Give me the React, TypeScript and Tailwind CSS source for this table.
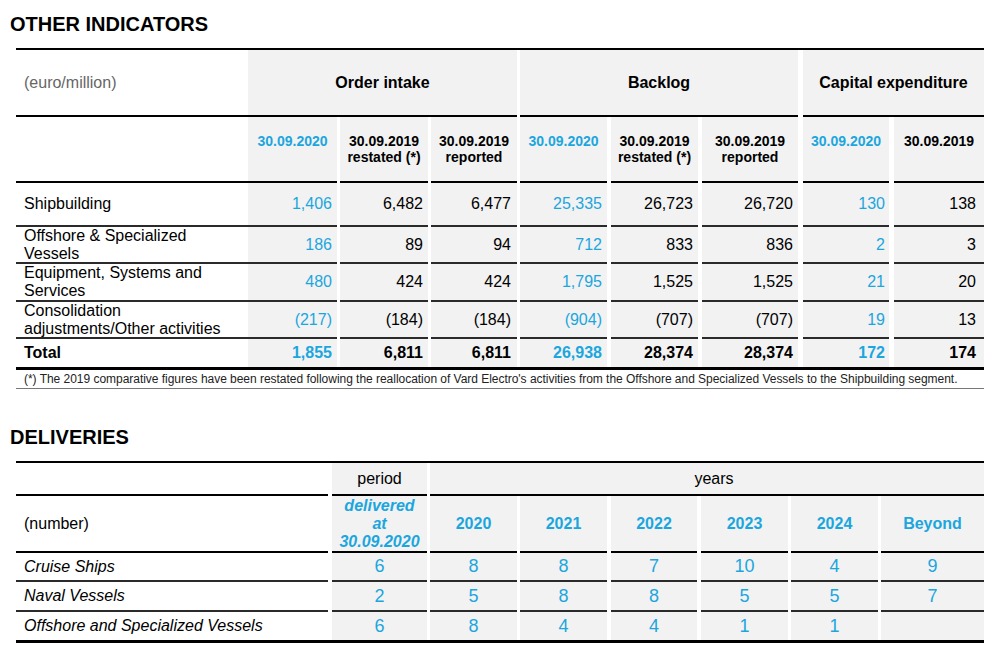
import React from 'react';

type Col = { box: string; pad: string; blue?: boolean };

// Other indicators: column boxes (gap + width) and right padding
const cols: Col[] = [
  { box: 'w-[89px]', pad: 'pr-[5px]', blue: true },
  { box: 'ml-[3px] w-[88px]', pad: 'pr-[5px]' },
  { box: 'ml-[3px] w-[86px]', pad: 'pr-[6px]' },
  { box: 'ml-[3px] w-[87px]', pad: 'pr-[5px]', blue: true },
  { box: 'ml-[4px] w-[87px]', pad: 'pr-[5px]' },
  { box: 'ml-[4px] w-[96px]', pad: 'pr-[5px]' },
  { box: 'ml-[5px] w-[86px]', pad: 'pr-[4px]', blue: true },
  { box: 'ml-[5px] w-[90px]', pad: 'pr-[8px]' },
];

const subHeads = [
  ['30.09.2020'],
  ['30.09.2019', 'restated (*)'],
  ['30.09.2019', 'reported'],
  ['30.09.2020'],
  ['30.09.2019', 'restated (*)'],
  ['30.09.2019', 'reported'],
  ['30.09.2020'],
  ['30.09.2019'],
];

const rows = [
  { label: ['Shipbuilding'], h: 'h-[44px]', values: ['1,406', '6,482', '6,477', '25,335', '26,723', '26,720', '130', '138'] },
  { label: ['Offshore & Specialized', 'Vessels'], h: 'h-[37px]', values: ['186', '89', '94', '712', '833', '836', '2', '3'] },
  { label: ['Equipment, Systems and', 'Services'], h: 'h-[38px]', values: ['480', '424', '424', '1,795', '1,525', '1,525', '21', '20'] },
  { label: ['Consolidation', 'adjustments/Other activities'], h: 'h-[37px]', values: ['(217)', '(184)', '(184)', '(904)', '(707)', '(707)', '19', '13'] },
];

const total = ['1,855', '6,811', '6,811', '26,938', '28,374', '28,374', '172', '174'];

// Deliveries columns
const dCols = [
  { box: 'ml-[4px] w-[95px]' },
  { box: 'ml-[3px] w-[87px]' },
  { box: 'ml-[3px] w-[87px]' },
  { box: 'ml-[4px] w-[86px]' },
  { box: 'ml-[4px] w-[87px]' },
  { box: 'ml-[3px] w-[87px]' },
  { box: 'ml-[3px] w-[103px]' },
];

const years = ['2020', '2021', '2022', '2023', '2024', 'Beyond'];

const deliveries = [
  { label: 'Cruise Ships', h: 'h-[29px]', values: ['6', '8', '8', '7', '10', '4', '9'] },
  { label: 'Naval Vessels', h: 'h-[30px]', values: ['2', '5', '8', '8', '5', '5', '7'] },
  { label: 'Offshore and Specialized Vessels', h: 'h-[28px]', values: ['6', '8', '4', '4', '1', '1', ''] },
];

const BLUE = 'text-[#1ca6de]';

export default function App() {
  return (
    <div className="w-[1000px] h-[660px] bg-white pl-[10px] pt-[12px] text-black font-['Liberation_Sans',Arial,sans-serif]">
      <h1 className="text-[20px] leading-[24px] font-bold">OTHER INDICATORS</h1>

      {/* Other indicators table */}
      <div className="ml-[6px] mt-[12px] w-[968px] border-t-2 border-black">
        {/* group headers */}
        <div className="flex h-[67px]">
          <div className="w-[232px] flex items-center pl-[8px] border-b-2 border-black text-[16px] text-[#666]">
            (euro/million)
          </div>
          <div className="w-[269px] flex items-center justify-center bg-[#f2f2f2] border-b-2 border-black text-[16px] font-bold">
            Order intake
          </div>
          <div className="ml-[3px] w-[278px] flex items-center justify-center bg-[#f2f2f2] border-b-2 border-black text-[16px] font-bold">
            Backlog
          </div>
          <div className="ml-[5px] w-[181px] flex items-center justify-center bg-[#f2f2f2] border-b-2 border-black text-[16px] font-bold">
            Capital expenditure
          </div>
        </div>

        {/* date headers */}
        <div className="flex h-[66px]">
          <div className="w-[232px] border-b-2 border-black" />
          {cols.map((c, i) => (
            <div
              key={i}
              className={`${c.box} ${c.blue ? BLUE : ''} bg-[#f2f2f2] border-b-2 border-black pt-[16px] text-center text-[14px] leading-[16px] font-bold`}
            >
              {subHeads[i].map((t) => (
                <div key={t}>{t}</div>
              ))}
            </div>
          ))}
        </div>

        {/* data rows */}
        {rows.map((r) => (
          <div key={r.label[0]} className={`flex ${r.h}`}>
            <div className="w-[232px] flex flex-col justify-center pl-[8px] border-b-2 border-[#2a2a2a] text-[16px] leading-[18px]">
              {r.label.map((l) => (
                <div key={l}>{l}</div>
              ))}
            </div>
            {cols.map((c, i) => (
              <div
                key={i}
                className={`${c.box} ${c.pad} ${c.blue ? BLUE : ''} bg-[#f2f2f2] border-b-2 border-[#2a2a2a] flex items-center justify-end text-[16px]`}
              >
                {r.values[i]}
              </div>
            ))}
          </div>
        ))}

        {/* total */}
        <div className="flex h-[31px] border-b-[3px] border-black font-bold">
          <div className="w-[232px] flex items-center pl-[8px] text-[16px]">Total</div>
          {cols.map((c, i) => (
            <div
              key={i}
              className={`${c.box} ${c.pad} ${c.blue ? BLUE : ''} bg-[#f2f2f2] flex items-center justify-end text-[16px]`}
            >
              {total[i]}
            </div>
          ))}
        </div>

        <div className="h-[19px] flex items-center pl-[8px] border-b border-[#777] text-[12px] tracking-[-0.03px] text-[#222] whitespace-nowrap">
          (*) The 2019 comparative figures have been restated following the reallocation of Vard Electro's activities from the Offshore and Specialized Vessels to the Shipbuilding segment.
        </div>
      </div>

      <h2 className="mt-[36px] text-[20px] leading-[24px] font-bold">DELIVERIES</h2>

      {/* Deliveries table */}
      <div className="ml-[6px] mt-[12px] w-[968px] border-t-2 border-b-[3px] border-black">
        <div className="flex h-[33px] text-[16px]">
          <div className="w-[312px] border-b-2 border-black" />
          <div className="ml-[4px] w-[95px] flex items-center justify-center bg-[#f2f2f2] border-b-2 border-black">
            period
          </div>
          <div className="ml-[3px] w-[554px] flex items-center justify-center pl-[14px] bg-[#f2f2f2] border-b-2 border-black">
            years
          </div>
        </div>

        <div className="flex h-[57px] text-[16px]">
          <div className="w-[312px] flex items-center pl-[8px] border-b-2 border-black">(number)</div>
          <div className={`${dCols[0].box} ${BLUE} bg-[#f2f2f2] border-b-2 border-black flex flex-col items-center justify-center leading-[18px] font-bold italic`}>
            <div>delivered</div>
            <div>at</div>
            <div>30.09.2020</div>
          </div>
          {years.map((y, i) => (
            <div
              key={y}
              className={`${dCols[i + 1].box} ${BLUE} bg-[#f2f2f2] border-b-2 border-black flex items-center justify-center font-bold`}
            >
              {y}
            </div>
          ))}
        </div>

        {deliveries.map((d, ri) => {
          const line = ri < deliveries.length - 1 ? 'border-b-2 border-[#2a2a2a]' : '';
          return (
            <div key={d.label} className={`flex ${d.h}`}>
              <div className={`w-[312px] flex items-center pl-[8px] italic text-[16px] ${line}`}>{d.label}</div>
              {dCols.map((c, i) => (
                <div
                  key={i}
                  className={`${c.box} ${BLUE} bg-[#f2f2f2] flex items-center justify-center text-[18px] ${line}`}
                >
                  {d.values[i]}
                </div>
              ))}
            </div>
          );
        })}
      </div>
    </div>
  );
}
